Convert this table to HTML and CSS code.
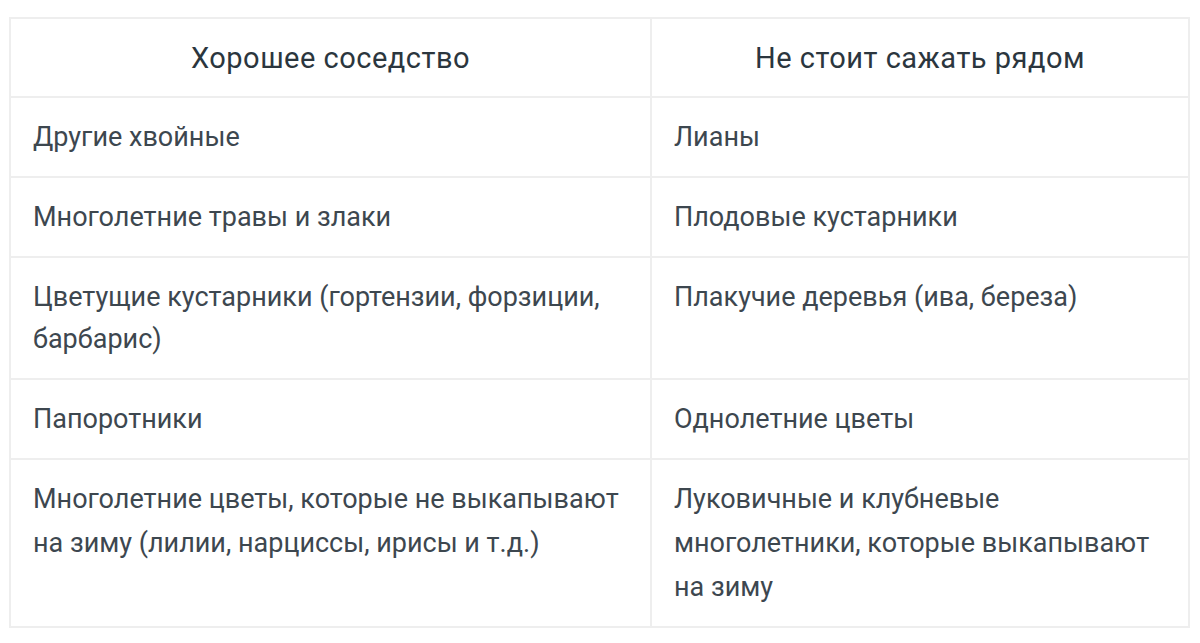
FILE: index.html
```html
<!DOCTYPE html>
<html lang="ru">
<head>
<meta charset="utf-8">
<link rel="stylesheet" href="styles.css">
</head>
<body>
<div class="wrap">
<table class="tbl">
  <colgroup><col class="c1"><col class="c2"></colgroup>
  <thead>
    <tr><th>Хорошее соседство</th><th class="hr">Не стоит сажать рядом</th></tr>
  </thead>
  <tbody>
    <tr><td>Другие хвойные</td><td>Лианы</td></tr>
    <tr><td>Многолетние травы и злаки</td><td>Плодовые кустарники</td></tr>
    <tr><td>Цветущие кустарники (гортензии, форзиции, барбарис)</td><td>Плакучие деревья (ива, береза)</td></tr>
    <tr><td>Папоротники</td><td>Однолетние цветы</td></tr>
    <tr class="tall"><td>Многолетние цветы, которые не выкапывают на зиму (лилии, нарциссы, ирисы и т.д.)</td><td>Луковичные и клубневые многолетники, которые выкапывают на зиму</td></tr>
  </tbody>
</table>
</div>
</body>
</html>
```

FILE: styles.css
```css
html, body { margin: 0; padding: 0; background: #fff; }
.wrap { padding: 17px 12px 0 9px; }
.tbl {
  width: 1179px;
  border-collapse: collapse;
  font-family: Roboto, "Liberation Sans", sans-serif;
  font-size: 27px;
  line-height: 42px;
  color: #3d474f;
  table-layout: fixed;
}
.c1 { width: 641px; }
.c2 { width: 538px; }
.tbl th, .tbl td {
  border: 2px solid #eeeeee;
  vertical-align: top;
  text-align: left;
}
.tbl th {
  font-weight: 400;
  font-size: 29px;
  color: #2b363e;
  text-align: center;
  padding: 18px 22px 17px;
  letter-spacing: 0.5px;
}
.tbl th.hr { border-left: 1px solid #c8c8c8; }
.tbl td { padding: 18px 22px 18px; }
.tbl .tall td { line-height: 44px; padding: 17px 22px 17px; }
```
